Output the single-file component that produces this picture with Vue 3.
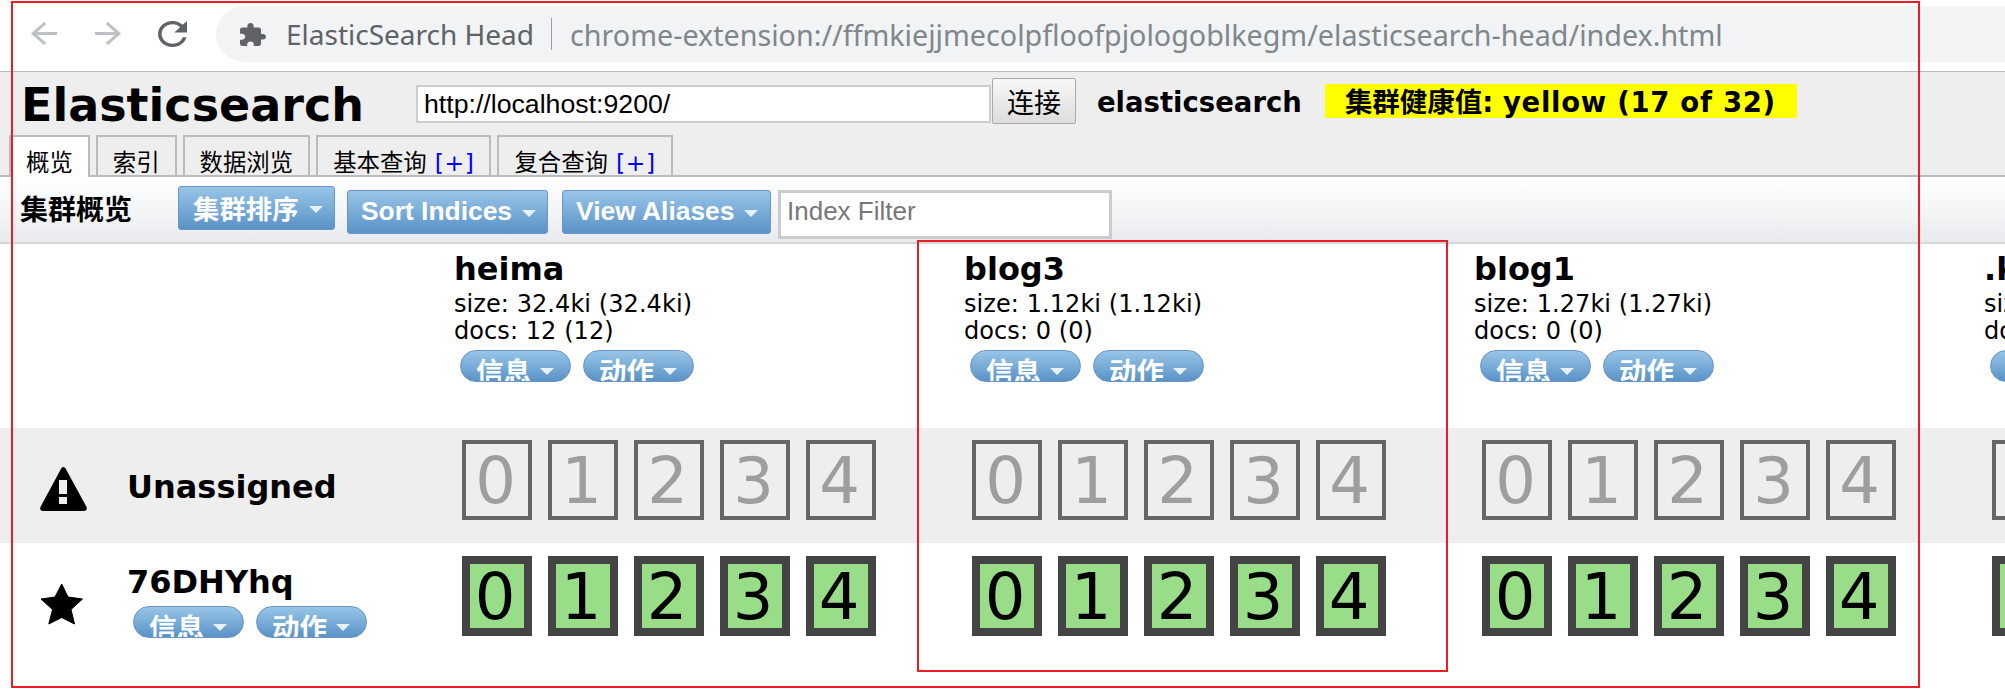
<template>
  <div class="page">
    <div class="chrome">
      <svg class="nav-back" viewBox="4 4 16 16" preserveAspectRatio="none"><path :d="arrowPath" fill="#bdc1c6" /></svg>
      <svg class="nav-forward" viewBox="4 4 16 16" preserveAspectRatio="none"><path :d="arrowPath" fill="#bdc1c6" transform="rotate(180 12 12)" /></svg>
      <svg class="nav-reload" viewBox="4 4 16 16" preserveAspectRatio="none"><path :d="reloadPath" fill="#5f6368" /></svg>
      <div class="omnibox">
        <svg class="ext-icon" viewBox="2 1 21 21" preserveAspectRatio="none"><path :d="puzzlePath" fill="#5f6368" /></svg>
        <span class="ext-name">ElasticSearch Head</span>
        <span class="omni-sep"></span>
        <span class="omni-url">chrome-extension://ffmkiejjmecolpfloofpjologoblkegm/elasticsearch-head/index.html</span>
      </div>
    </div>

    <div class="header">
      <div class="header-top">
        <h1 class="logo">Elasticsearch</h1>
        <input class="url-input" value="http://localhost:9200/" />
        <button class="connect">连接</button>
        <span class="cluster-name">elasticsearch</span>
        <span class="health">集群健康值: <span class="health-value">yellow (17 of 32)</span></span>
      </div>
      <div class="tabs">
        <div v-for="tab in tabs" :key="tab.name" class="tab" :class="{ active: tab.active }">
          {{ tab.name }}<span v-if="tab.plus" class="plus"> [+]</span>
        </div>
      </div>
    </div>

    <div class="toolbar">
      <h2 class="toolbar-title">集群概览</h2>
      <button class="tool-btn first">集群排序<i class="caret"></i></button>
      <button class="tool-btn second">Sort Indices<i class="caret"></i></button>
      <button class="tool-btn third">View Aliases<i class="caret"></i></button>
      <input class="filter" placeholder="Index Filter" />
    </div>

    <div class="grid head-row">
      <div></div>
      <div v-for="index in indices" :key="index.name" class="index-head">
        <h3>{{ index.name }}</h3>
        <div class="stat">size: {{ index.size }} ({{ index.size }})</div>
        <div class="stat">docs: {{ index.docs }} ({{ index.docs }})</div>
        <div class="pills">
          <button class="pill">信息<i class="caret"></i></button>
          <button class="pill">动作<i class="caret"></i></button>
        </div>
      </div>
    </div>

    <div class="grid shard-row unassigned">
      <div class="node-cell">
        <svg class="warn-icon" viewBox="0 0 47 44">
          <path fill-rule="evenodd" d="M23.300 0C24.600 0 25.400 1 26 2.200L46.300 39.500C47.500 42 46.500 44 44 44H3C0.500 44 -0.500 42 0.700 39.500L20.800 2.200C21.400 1 22 0 23.300 0ZM19 13V27H27V13ZM19 30V37H27V30Z" />
        </svg>
        <span class="node-name">Unassigned</span>
      </div>
      <div v-for="index in indices" :key="index.name" class="shards">
        <div v-for="n in 5" :key="n" class="shard">{{ n - 1 }}</div>
      </div>
    </div>

    <div class="grid shard-row node">
      <div class="node-cell master">
        <svg class="star-icon" viewBox="0 0 44 42">
          <path d="M21.700 1L28 14L42.500 16L31 26.500L34.500 41L21.700 34.500L8.800 41L12.500 26.500L1 16L15 14Z" stroke="#000" stroke-width="1" stroke-linejoin="round" />
        </svg>
        <div>
          <h3 class="node-title">76DHYhq</h3>
          <div class="pills">
            <button class="pill">信息<i class="caret"></i></button>
            <button class="pill">动作<i class="caret"></i></button>
          </div>
        </div>
      </div>
      <div v-for="index in indices" :key="index.name" class="shards">
        <div v-for="n in 5" :key="n" class="shard started">{{ n - 1 }}</div>
      </div>
    </div>

    <div class="mark outer-mark"></div>
    <div class="mark inner-mark"></div>
  </div>
</template>

<script setup>
const arrowPath = 'M20 11H7.830l5.590-5.590L12 4l-8 8 8 8 1.410-1.410L7.830 13H20v-2z'
const reloadPath = 'M17.650 6.350A7.958 7.958 0 0012 4c-4.420 0-7.990 3.580-7.990 8s3.570 8 7.990 8c3.730 0 6.840-2.550 7.730-6h-2.080A5.990 5.990 0 0112 18c-3.310 0-6-2.690-6-6s2.690-6 6-6c1.660 0 3.140.690 4.220 1.780L13 11h7V4l-2.350 2.350z'
const puzzlePath = 'M20.500 11H19V7c0-1.100-.900-2-2-2h-4V3.500C13 2.120 11.880 1 10.500 1S8 2.120 8 3.500V5H4c-1.100 0-1.990.900-1.990 2v3.800H3.500c1.490 0 2.700 1.210 2.700 2.700s-1.210 2.700-2.700 2.700H2V20c0 1.100.900 2 2 2h3.800v-1.500c0-1.490 1.210-2.700 2.700-2.700 1.490 0 2.700 1.210 2.700 2.700V22H17c1.100 0 2-.900 2-2v-4h1.500c1.380 0 2.500-1.120 2.500-2.500S21.880 11 20.500 11z'

const tabs = [
  { name: '概览', active: true },
  { name: '索引' },
  { name: '数据浏览' },
  { name: '基本查询', plus: true },
  { name: '复合查询', plus: true }
]

const indices = [
  { name: 'heima', size: '32.4ki', docs: 12 },
  { name: 'blog3', size: '1.12ki', docs: 0 },
  { name: 'blog1', size: '1.27ki', docs: 0 },
  { name: '.kibana', size: '3.70ki', docs: 1 }
]
</script>

<style>
html, body {
  margin: 0;
  background: #fff;
}
</style>

<style scoped>
.page {
  position: relative;
  width: 2005px;
  height: 692px;
  overflow: hidden;
  background: #fff;
  color: #000;
  font-family: "DejaVu Sans", "Noto Sans CJK SC", sans-serif;
}
h1, h2, h3 {
  margin: 0;
}
button {
  font-family: inherit;
  cursor: pointer;
}

/* browser bar */
.chrome {
  display: flex;
  height: 71px;
  border-bottom: 1px solid #bbb;
  box-sizing: content-box;
}
.nav-back {
  width: 26px;
  height: 23px;
  margin: 22px 0 0 31px;
}
.nav-forward {
  width: 26px;
  height: 23px;
  margin: 22px 0 0 38px;
}
.nav-reload {
  width: 29px;
  height: 26px;
  margin: 21px 0 0 37px;
}
.omnibox {
  flex: 1;
  display: flex;
  align-items: center;
  height: 56px;
  margin: 6px 0 0 29px;
  border-radius: 28px 0 0 28px;
  background: #f1f3f4;
  font-family: "Noto Sans", "Open Sans", sans-serif;
  font-size: 28px;
  white-space: nowrap;
}
.ext-icon {
  width: 26px;
  height: 23px;
  margin-left: 24px;
}
.ext-name {
  margin-left: 20px;
  color: #5f6368;
}
.omni-sep {
  width: 1px;
  height: 32px;
  margin: 0 18px 0 17px;
  background: #9aa0a6;
}
.omni-url {
  color: #80868b;
  font-size: 28.7px;
}

/* app header */
.header {
  height: 103px;
  background: #eee;
  border-bottom: 2px solid #bbb;
}
.header-top {
  display: flex;
  align-items: flex-start;
  height: 63px;
  padding-left: 21px;
}
.logo {
  margin-top: 5px;
  font-size: 46px;
  line-height: 56px;
  font-weight: 700;
}
.url-input {
  box-sizing: border-box;
  width: 575px;
  height: 38px;
  margin: 13px 0 0 52px;
  padding: 0 6px;
  border: 2px solid #ccc;
  background: #fff;
  font-family: "Liberation Sans", sans-serif;
  font-size: 26.7px;
  outline: none;
}
.connect {
  box-sizing: border-box;
  width: 84px;
  height: 46px;
  margin: 6px 0 0 1px;
  padding: 0;
  border: 1px solid #aaa;
  border-radius: 2px;
  background: linear-gradient(#f8f8f8, #ddd);
  color: #000;
  font-size: 27px;
}
.cluster-name {
  margin: 13px 0 0 21px;
  font-size: 27.5px;
  line-height: 34px;
  font-weight: 700;
}
.health {
  box-sizing: border-box;
  width: 472px;
  height: 34px;
  margin: 12px 0 0 23px;
  padding-left: 20px;
  overflow: hidden;
  background: #ff0;
  font-size: 27.5px;
  line-height: 37px;
  font-weight: 700;
  white-space: nowrap;
}
.health-value {
  letter-spacing: 0.7px;
}
.tabs {
  display: flex;
  gap: 6px;
  padding-left: 9px;
}
.tab {
  box-sizing: border-box;
  height: 40px;
  padding: 0 15px;
  border: 2px solid #bbb;
  border-bottom: 0;
  font-size: 23.4px;
  line-height: 52px;
  white-space: nowrap;
}
.tab.active {
  height: 42px;
  background: #fff;
}
.plus {
  color: #00f;
  letter-spacing: 0.6px;
}

/* cluster toolbar */
.toolbar {
  display: flex;
  align-items: flex-start;
  height: 65px;
  background: linear-gradient(#fff, #e8ebee);
  border-bottom: 2px solid #d5d8db;
}
.toolbar-title {
  width: 158px;
  margin: 17px 0 0 20px;
  font-size: 28px;
  line-height: 34px;
  font-weight: 700;
  white-space: nowrap;
}
.tool-btn {
  display: flex;
  align-items: center;
  box-sizing: border-box;
  height: 44px;
  padding: 0 0 2px 13px;
  border: 1px solid #6c94c8;
  border-radius: 3px;
  background: linear-gradient(#98c5e8, #5a93c7);
  color: #fff;
  font-size: 26.4px;
  font-weight: 700;
  font-family: "Liberation Sans", "Noto Sans CJK SC", sans-serif;
  white-space: nowrap;
}
.tool-btn.first {
  width: 157px;
  margin-top: 9px;
  padding-left: 14px;
}
.tool-btn.second {
  width: 201px;
  margin: 13px 0 0 12px;
}
.tool-btn.third {
  width: 209px;
  margin: 13px 0 0 14px;
}
.caret {
  display: inline-block;
  width: 0;
  height: 0;
  margin: 4px 0 0 10px;
  border-left: 7px solid transparent;
  border-right: 7px solid transparent;
  border-top: 7px solid #e8f1f9;
}
.filter {
  box-sizing: border-box;
  width: 334px;
  height: 49px;
  margin: 13px 0 0 7px;
  padding: 0 6px 7px;
  border: 3px solid #ccc;
  background: #fff;
  font-family: "Liberation Sans", sans-serif;
  font-size: 26px;
  outline: none;
}
.filter::placeholder {
  color: #777;
}

/* cluster overview grid */
.grid {
  display: grid;
  grid-template-columns: 454px repeat(4, 510px);
}
.head-row {
  height: 184px;
}
.index-head {
  padding: 6px 0 0;
  white-space: nowrap;
}
.index-head h3,
.node-title {
  font-size: 32px;
  line-height: 38px;
  font-weight: 700;
}
.stat {
  font-size: 24px;
  line-height: 28px;
  letter-spacing: 0.07px;
}
.index-head .stat:first-of-type {
  margin: 2px 0 -1px;
}
.pills {
  display: flex;
  gap: 12px;
  margin: 5px 0 0 6px;
}
.pill {
  display: block;
  box-sizing: border-box;
  width: 111px;
  height: 32px;
  padding: 5px 0 0 15px;
  overflow: hidden;
  border: 1px solid #6c94c8;
  border-radius: 16px;
  background: linear-gradient(#98c5e8, #5a93c7);
  color: #fff;
  font-size: 27.5px;
  line-height: 32px;
  font-weight: 700;
  text-align: left;
  white-space: nowrap;
}
.pill .caret {
  margin: 0 0 5px 9px;
  vertical-align: middle;
}
.shard-row {
  height: 115px;
}
.unassigned {
  background: #eee;
}
.shards {
  display: flex;
  gap: 16px;
  padding: 12px 0 0 8px;
}
.node .shards {
  padding-top: 13px;
}
.shard {
  box-sizing: border-box;
  width: 70px;
  height: 80px;
  padding-right: 3px;
  border: 4px solid #666;
  color: #9e9e9e;
  font-size: 64px;
  line-height: 74px;
  text-align: center;
}
.shard.started {
  padding-right: 4px;
  border: 8px solid #444;
  background: #99dd88;
  color: #000;
  line-height: 66px;
}
.node-cell {
  display: flex;
  align-items: center;
  padding-left: 40px;
}
.node-name {
  margin: 2px 0 0 40px;
  font-size: 32px;
  font-weight: 700;
}
.warn-icon {
  width: 47px;
  height: 44px;
  flex: none;
  margin-top: 7px;
}
.master {
  align-items: flex-start;
  padding-top: 20px;
}
.star-icon {
  width: 44px;
  height: 42px;
  flex: none;
  margin: 20px 43px 0 0;
}

/* red annotation frames drawn over the screenshot */
.mark {
  position: absolute;
  box-sizing: border-box;
  border: 2px solid #ed1c24;
  pointer-events: none;
}
.outer-mark {
  left: 11px;
  top: 1px;
  width: 1909px;
  height: 687px;
}
.inner-mark {
  left: 917px;
  top: 240px;
  width: 531px;
  height: 432px;
}
</style>
